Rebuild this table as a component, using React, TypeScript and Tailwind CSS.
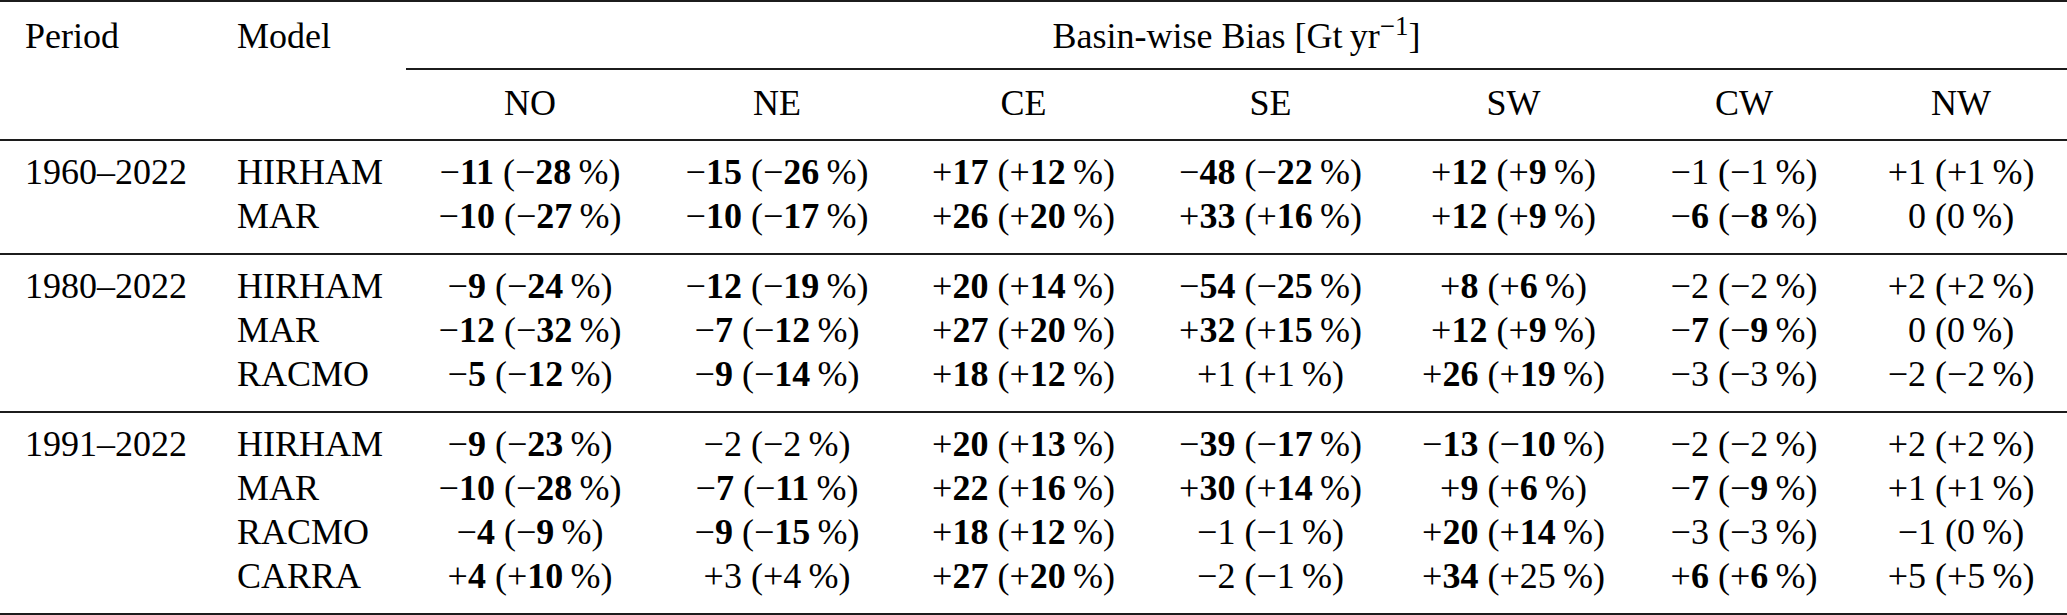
const columns = ["NO", "NE", "CE", "SE", "SW", "CW", "NW"]

// text between asterisks is set in bold
const groups = [
  {
    period: "1960–2022",
    rows: [
      ["HIRHAM", "−*11* (−*28*%)", "−*15* (−*26*%)", "+*17* (+*12*%)", "−*48* (−*22*%)", "+*12* (+*9*%)", "−1 (−1%)", "+1 (+1%)"],
      ["MAR", "−*10* (−*27*%)", "−*10* (−*17*%)", "+*26* (+*20*%)", "+*33* (+*16*%)", "+*12* (+*9*%)", "−*6* (−*8*%)", "0 (0%)"],
    ],
  },
  {
    period: "1980–2022",
    rows: [
      ["HIRHAM", "−*9* (−*24*%)", "−*12* (−*19*%)", "+*20* (+*14*%)", "−*54* (−*25*%)", "+*8* (+*6*%)", "−2 (−2%)", "+2 (+2%)"],
      ["MAR", "−*12* (−*32*%)", "−*7* (−*12*%)", "+*27* (+*20*%)", "+*32* (+*15*%)", "+*12* (+*9*%)", "−*7* (−*9*%)", "0 (0%)"],
      ["RACMO", "−*5* (−*12*%)", "−*9* (−*14*%)", "+*18* (+*12*%)", "+1 (+1%)", "+*26* (+*19*%)", "−3 (−3%)", "−2 (−2%)"],
    ],
  },
  {
    period: "1991–2022",
    rows: [
      ["HIRHAM", "−*9* (−*23*%)", "−2 (−2%)", "+*20* (+*13*%)", "−*39* (−*17*%)", "−*13* (−*10*%)", "−2 (−2%)", "+2 (+2%)"],
      ["MAR", "−*10* (−*28*%)", "−*7* (−*11*%)", "+*22* (+*16*%)", "+*30* (+*14*%)", "+*9* (+*6*%)", "−*7* (−*9*%)", "+1 (+1%)"],
      ["RACMO", "−*4* (−*9*%)", "−*9* (−*15*%)", "+*18* (+*12*%)", "−1 (−1%)", "+*20* (+*14*%)", "−3 (−3%)", "−1 (0%)"],
      ["CARRA", "+*4* (+*10*%)", "+3 (+4%)", "+*27* (+*20*%)", "−2 (−1%)", "+*34* (+25%)", "+*6* (+*6*%)", "+5 (+5%)"],
    ],
  },
]

function Value({ text }: { text: string }) {
  const parts = text.replace("%", "\u2009%").split("*")
  return (
    <>
      {parts.map((part, i) =>
        i % 2 === 1 ? (
          <b key={i} className="font-bold">
            {part}
          </b>
        ) : (
          <span key={i}>{part}</span>
        ),
      )}
    </>
  )
}

export default function App() {
  return (
    <div className="bg-white font-serif font-['Liberation_Serif',serif]">
      <table className="w-[2067px] table-fixed border-separate border-spacing-0 font-['Liberation_Serif'] text-[36px] leading-[44px] text-black">
        <colgroup>
          <col className="w-[212px]" />
          <col className="w-[194px]" />
          <col className="w-[248px]" />
          <col className="w-[246px]" />
          <col className="w-[247px]" />
          <col className="w-[247px]" />
          <col className="w-[239px]" />
          <col className="w-[222px]" />
          <col className="w-[212px]" />
        </colgroup>
        <thead>
          <tr>
            <th className="border-t-2 border-[#1c1c1c] pt-[12px] pb-[10px] pl-[25px] text-left align-top font-normal">
              Period
            </th>
            <th className="border-t-2 border-[#1c1c1c] pt-[12px] pb-[10px] pl-[25px] text-left align-top font-normal">
              Model
            </th>
            <th
              colSpan={7}
              className="border-t-2 border-b-2 border-[#1c1c1c] pt-[12px] pb-[10px] text-center align-top font-normal"
            >
              Basin-wise Bias [Gt{"\u2009"}yr<sup>−1</sup>]
            </th>
          </tr>
          <tr>
            <th className="border-b-2 border-[#1c1c1c] pt-[11px] pb-[14px]" />
            <th className="border-b-2 border-[#1c1c1c] pt-[11px] pb-[14px]" />
            {columns.map((c) => (
              <th
                key={c}
                className="border-b-2 border-[#1c1c1c] pt-[11px] pb-[14px] text-center align-top font-normal"
              >
                {c}
              </th>
            ))}
          </tr>
        </thead>
        <tbody>
          {groups.map((group) =>
            group.rows.map((row, r) => {
              const first = r === 0
              const last = r === group.rows.length - 1
              const pad = [
                "align-top whitespace-nowrap",
                first ? "pt-[9px]" : "",
                last ? "pb-[15px] border-b-2 border-[#1c1c1c]" : "",
              ].join(" ")
              return (
                <tr key={group.period + row[0]}>
                  <td className={`${pad} pl-[25px] text-left`}>{first ? group.period : ""}</td>
                  <td className={`${pad} pl-[25px] text-left`}>{row[0]}</td>
                  {row.slice(1).map((v, i) => (
                    <td key={i} className={`${pad} text-center`}>
                      <Value text={v} />
                    </td>
                  ))}
                </tr>
              )
            }),
          )}
        </tbody>
      </table>
    </div>
  )
}
